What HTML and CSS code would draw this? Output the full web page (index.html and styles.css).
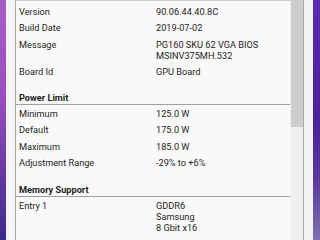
FILE: index.html
```html
<!DOCTYPE html>
<html>
<head>
<meta charset="utf-8">
<link rel="stylesheet" href="styles.css">
</head>
<body>
<div class="desktop">
  <div class="bg bg-left"></div>
  <div class="window">
    <div class="panel">
      <div class="content">
        <div class="row"><div class="label">Version</div><div class="value">90.06.44.40.8C</div></div>
        <div class="row"><div class="label">Build Date</div><div class="value">2019-07-02</div></div>
        <div class="row"><div class="label">Message</div><div class="value">PG160 SKU 62 VGA BIOS<br>MSINV375MH.532</div></div>
        <div class="row"><div class="label">Board Id</div><div class="value">GPU Board</div></div>
        <div class="section">Power Limit</div>
        <div class="row"><div class="label">Minimum</div><div class="value">125.0 W</div></div>
        <div class="row"><div class="label">Default</div><div class="value">175.0 W</div></div>
        <div class="row"><div class="label">Maximum</div><div class="value">185.0 W</div></div>
        <div class="row"><div class="label">Adjustment Range</div><div class="value">-29% to +6%</div></div>
        <div class="section section-b">Memory Support</div>
        <div class="row"><div class="label">Entry 1</div><div class="value">GDDR6<br>Samsung<br>8 Gbit x16</div></div>
      </div>
      <div class="scrollbar"><div class="thumb"></div></div>
    </div>
  </div>
  <div class="bg bg-right"></div>
</div>
</body>
</html>
```
FILE: styles.css
```css
html, body {
  margin: 0;
  padding: 0;
}
body {
  width: 320px;
  height: 240px;
  overflow: hidden;
  font-family: Roboto, "Liberation Sans", sans-serif;
  font-size: 9.2px;
  color: #1e1e1e;
}
.desktop {
  display: flex;
  height: 240px;
}
.bg-left {
  width: 6px;
  background: linear-gradient(180deg, #a45fc6 0%, #9a4fc0 40%, #6a3aa8 70%, #3b2c8c 100%);
}
.bg-right {
  width: 7px;
  background: linear-gradient(180deg, #5a2ab0 0%, #4a229a 50%, #5b3a9c 75%, #8070b0 100%);
}
.window {
  width: 307px;
  box-sizing: border-box;
  padding: 0 9px;
  background: #f4f4f4;
  display: flex;
}
.panel {
  flex: 1;
  display: flex;
  border-left: 1px solid #a8a8a8;
  border-right: 1px solid #a8a8a8;
  border-top: 1px solid #cfcfcf;
  background: #f9f9f9;
}
.content {
  flex: 1;
  padding-top: 1.75px;
}
.row {
  display: grid;
  grid-template-columns: 137px 1fr;
  padding: 2.75px 0 2.75px 3px;
  line-height: 11px;
}
.section {
  font-weight: bold;
  line-height: 11px;
  padding: 11.75px 0 1.5px 3px;
  border-bottom: 1px solid #a0a0a0;
}
.section-b {
  padding-top: 12.5px;
}
.scrollbar {
  width: 13px;
  box-sizing: border-box;
  padding-left: 1px;
  background: #f0f0f0;
}
.thumb {
  height: 126px;
  background: #cdcdcd;
}
```
